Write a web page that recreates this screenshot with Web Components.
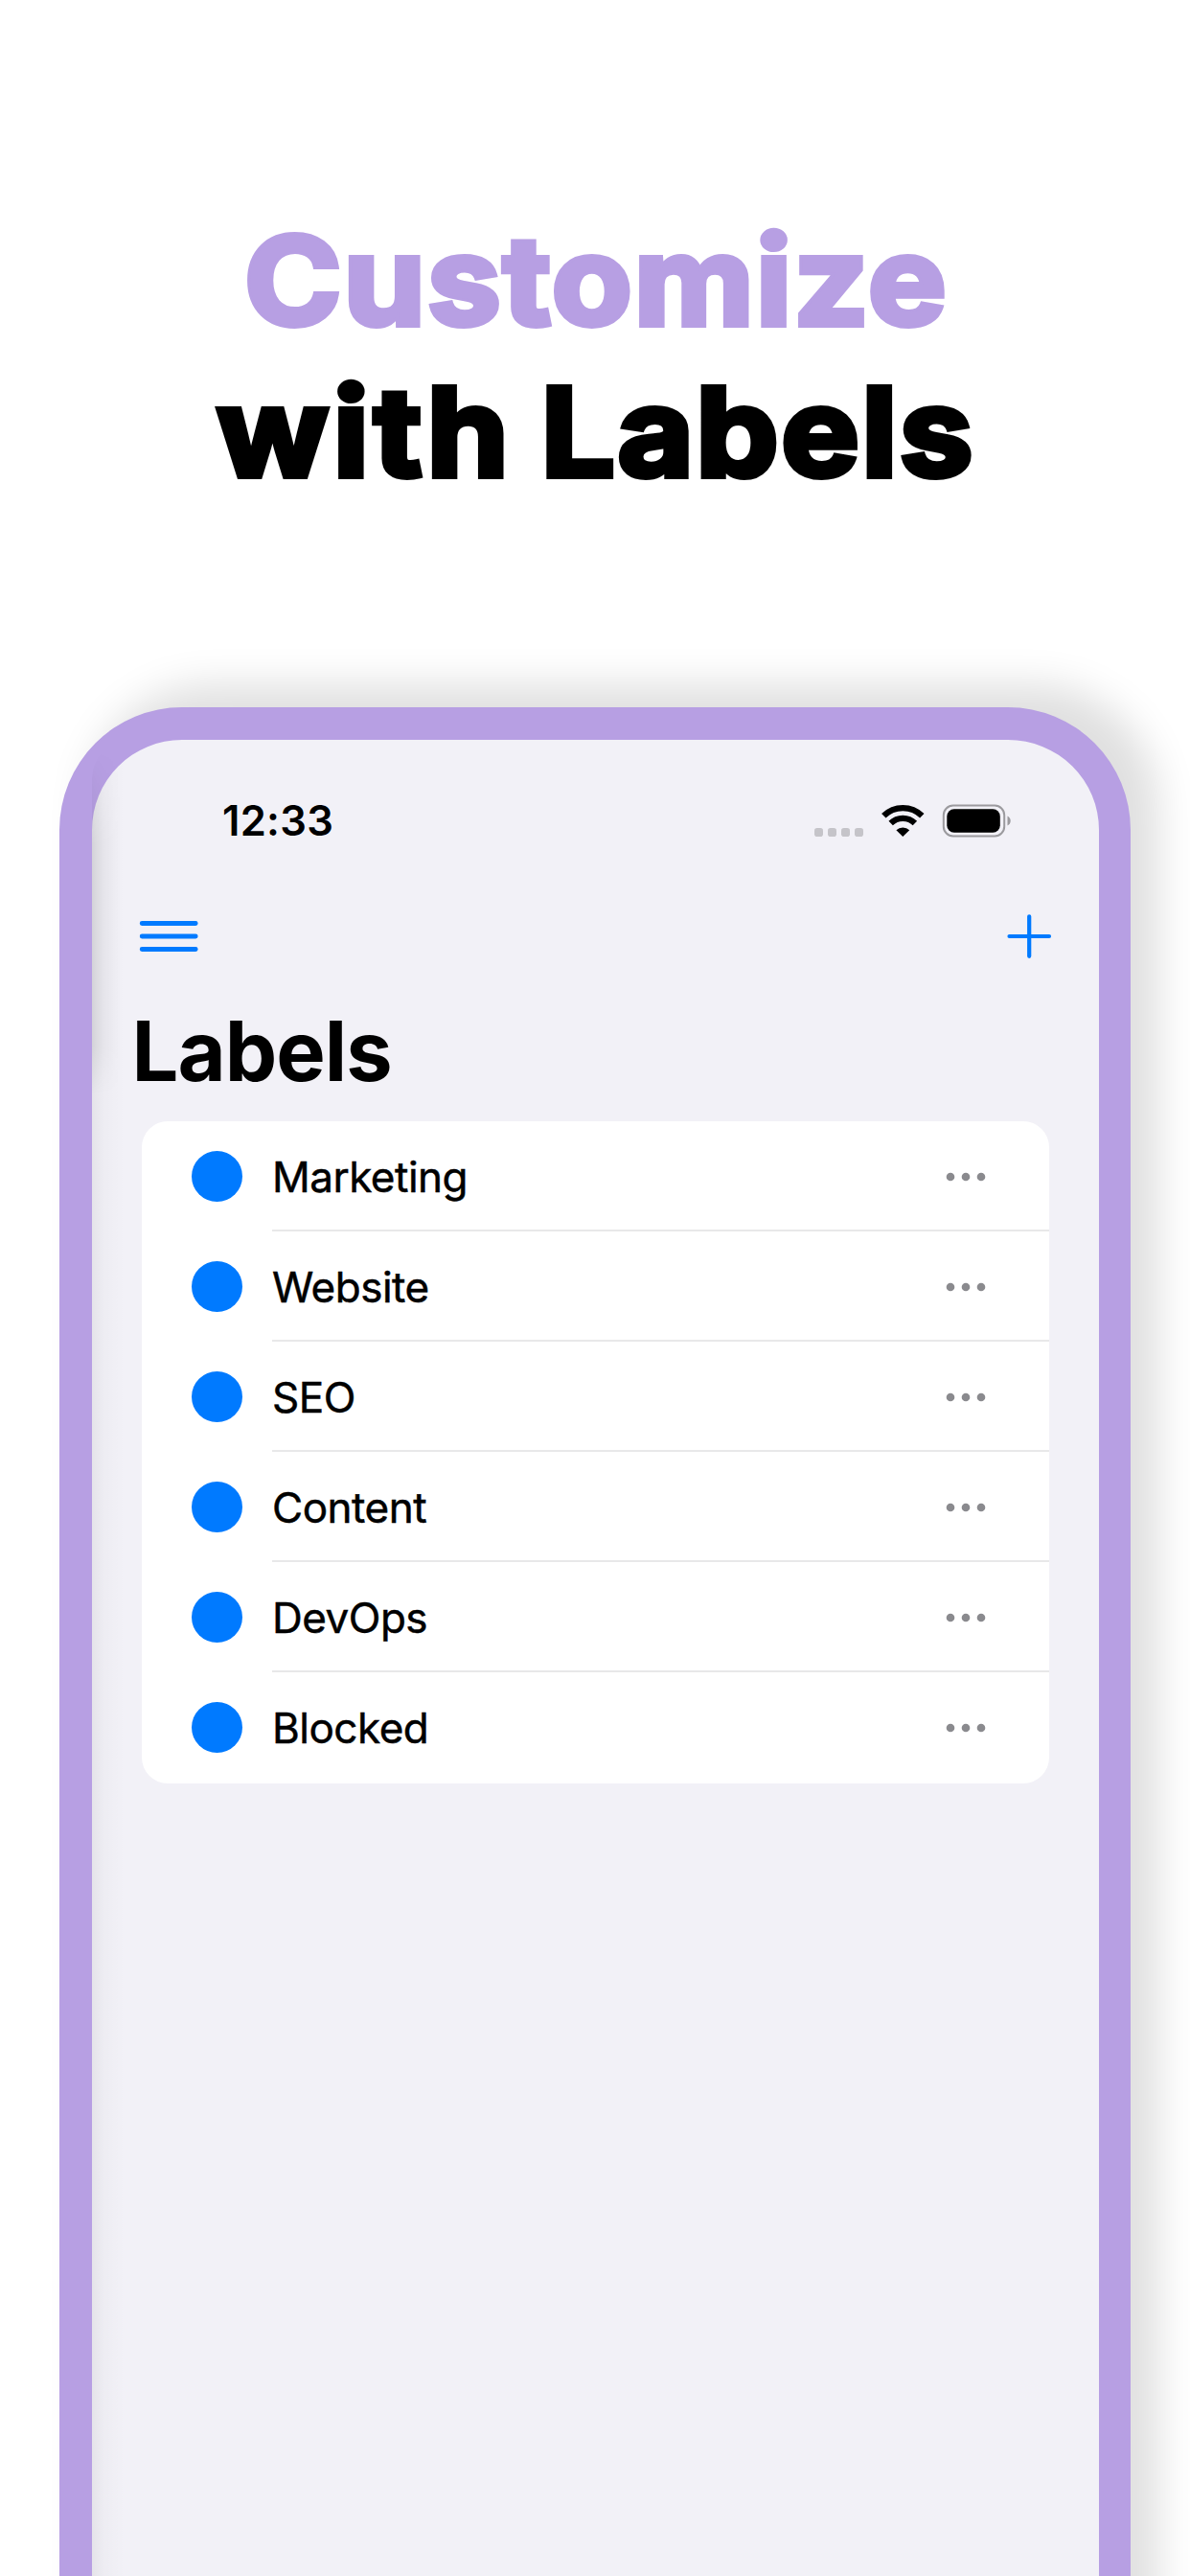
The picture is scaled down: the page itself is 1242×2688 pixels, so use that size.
<!DOCTYPE html>
<html lang="en">
<head>
<meta charset="utf-8">
<title>Customize with Labels</title>
<style>
html,body{margin:0;width:1242px;height:2688px;overflow:hidden;background:#fff}
body{font-family:Inter,"Liberation Sans",sans-serif;color:#000}
</style>
</head>
<body>
<promo-page>
  <promo-title slot="title"></promo-title>
  <phone-frame>
    <status-bar time="12:33"></status-bar>
    <nav-bar></nav-bar>
    <page-heading>Labels</page-heading>
    <label-list>
      <label-row>Marketing</label-row>
      <label-row>Website</label-row>
      <label-row>SEO</label-row>
      <label-row>Content</label-row>
      <label-row>DevOps</label-row>
      <label-row last>Blocked</label-row>
    </label-list>
  </phone-frame>
</promo-page>
<script>
const define = (name, html) => customElements.define(name, class extends HTMLElement {
  constructor() {
    super();
    this.attachShadow({ mode: 'open' }).innerHTML = html;
  }
  connectedCallback() {
    const t = this.shadowRoot.querySelector('[data-time]');
    if (t) t.textContent = this.getAttribute('time');
  }
});

define('promo-page', `
<style>
:host{display:flex;flex-direction:column;width:1242px;height:2688px;overflow:hidden;background:#fff}
</style>
<slot name="title"></slot><slot></slot>`);

define('promo-title', `
<style>
:host{display:flex;flex-direction:column;align-items:center;height:738px;box-sizing:border-box;padding-top:214px;flex:none;
 font-weight:700;font-size:128px;line-height:158px}
div{white-space:nowrap;-webkit-text-stroke:6px currentColor;stroke-linejoin:round;paint-order:stroke fill;transform:scaleX(1.07);padding-left:2px}
.a{color:#b79fe3;letter-spacing:2px}
.b{letter-spacing:2.300px;word-spacing:-6px}
.b span{letter-spacing:4.800px}
</style>
<div class="a">Customize</div><div class="b"><span>with</span> Labels</div>`);

define('phone-frame', `
<style>
:host{display:flex;flex-direction:column;flex:none;box-sizing:border-box;width:1118px;height:2300px;margin-left:62px;position:relative;
 border:34px solid #b79fe3;border-right-width:33px;border-radius:128px;
 background:linear-gradient(90deg,rgba(0,0,0,.055),rgba(0,0,0,.02) 12px,transparent 34px) #f2f1f7;
 background-origin:padding-box;
 box-shadow:29px -24px 40px rgba(0,0,0,.125)}
:host::before{content:"";position:absolute;left:0;top:0;width:40px;height:370px;border-top-left-radius:94px;
 background:linear-gradient(90deg,rgba(0,0,0,.07),rgba(0,0,0,.03) 12px,transparent 30px);
 -webkit-mask-image:linear-gradient(transparent 10px,#000 110px,#000 320px,transparent);mask-image:linear-gradient(transparent 10px,#000 110px,#000 320px,transparent)}
</style>
<slot></slot>`);

define('status-bar', `
<style>
:host{display:flex;height:168px;align-items:center;box-sizing:border-box;padding:0 90px 0 136px;justify-content:space-between}
span{font-size:43.500px;font-weight:600;line-height:52px;letter-spacing:.3px}
svg{display:block}
</style>
<span data-time></span>
<svg width="207" height="40" viewBox="0 0 207 40">
 <g fill="#c5c4c9"><rect x="0" y="28" width="9" height="9" rx="2.800"/><rect x="14" y="28" width="9" height="9" rx="2.800"/><rect x="28" y="28" width="9" height="9" rx="2.800"/><rect x="42" y="28" width="9" height="9" rx="2.800"/></g>
 <g fill="none" stroke="#000"><path d="M72.300 15.300a28.500 28.500 0 0 1 40 0" stroke-width="6.300"/><path d="M79.700 23a18 18 0 0 1 25.200 0" stroke-width="6.300"/></g>
 <path d="M85.400 30.300a9.800 9.800 0 0 1 13.800 0L92.300 37z"/>
 <rect x="134.800" y="4.500" width="63.400" height="32" rx="10" fill="none" stroke="#9b9a9e" stroke-width="2"/>
 <rect x="138.300" y="8.300" width="55.500" height="24.500" rx="7.500"/>
 <path d="M201.500 15.500v10c4.300-2 4.300-8 0-10z" fill="#9b9a9e"/>
</svg>`);

define('nav-bar', `
<style>
:host{display:flex;height:74px;align-items:center;justify-content:space-between;box-sizing:border-box;padding:0 49px 0 48.500px}
svg{display:block}
</style>
<svg width="62" height="34" viewBox="0 0 62 34" stroke="#007aff" stroke-width="4.800" stroke-linecap="round"><path d="M3.200 3.500h56M3.200 17h56M3.200 30.500h56"/></svg>
<svg width="48" height="48" viewBox="0 0 48 48" stroke="#007aff" stroke-width="4.200" stroke-linecap="round"><path d="M3.500 24h41.500M24.200 3.300v41.500"/></svg>`);

define('page-heading', `
<style>
:host{display:block;height:156px;box-sizing:border-box;padding:31px 0 0 41.500px;font-size:86.500px;font-weight:700;line-height:104px;letter-spacing:-1px}
</style>
<slot></slot>`);

define('label-list', `
<style>
:host{display:flex;flex-direction:column;margin:0 52px;border-radius:27px;background:#fff;overflow:hidden}
</style>
<slot></slot>`);

define('label-row', `
<style>
:host{display:flex;height:115.100px;box-sizing:border-box;padding-left:52px;align-items:stretch}
.dot{width:53px;height:53px;border-radius:50%;background:#007aff;margin:31px 31px 0 0;flex:none}
.body{display:flex;flex:1;justify-content:space-between;border-bottom:2px solid #e8e8e9;box-sizing:border-box;padding-right:65px}
:host([last]) .body{border-color:transparent}
.name{font-size:44px;font-weight:400;line-height:54px;padding-top:31px;letter-spacing:-.5px;-webkit-text-stroke:.5px #000}
svg{display:block;margin-top:51.500px}
</style>
<div class="dot"></div>
<div class="body"><div class="name"><slot></slot></div>
<svg width="44" height="12" viewBox="0 0 44 12" fill="#8a8a8e"><circle cx="6" cy="6" r="4.300"/><circle cx="22" cy="6" r="4.300"/><circle cx="38" cy="6" r="4.300"/></svg></div>`);
</script>
</body>
</html>
